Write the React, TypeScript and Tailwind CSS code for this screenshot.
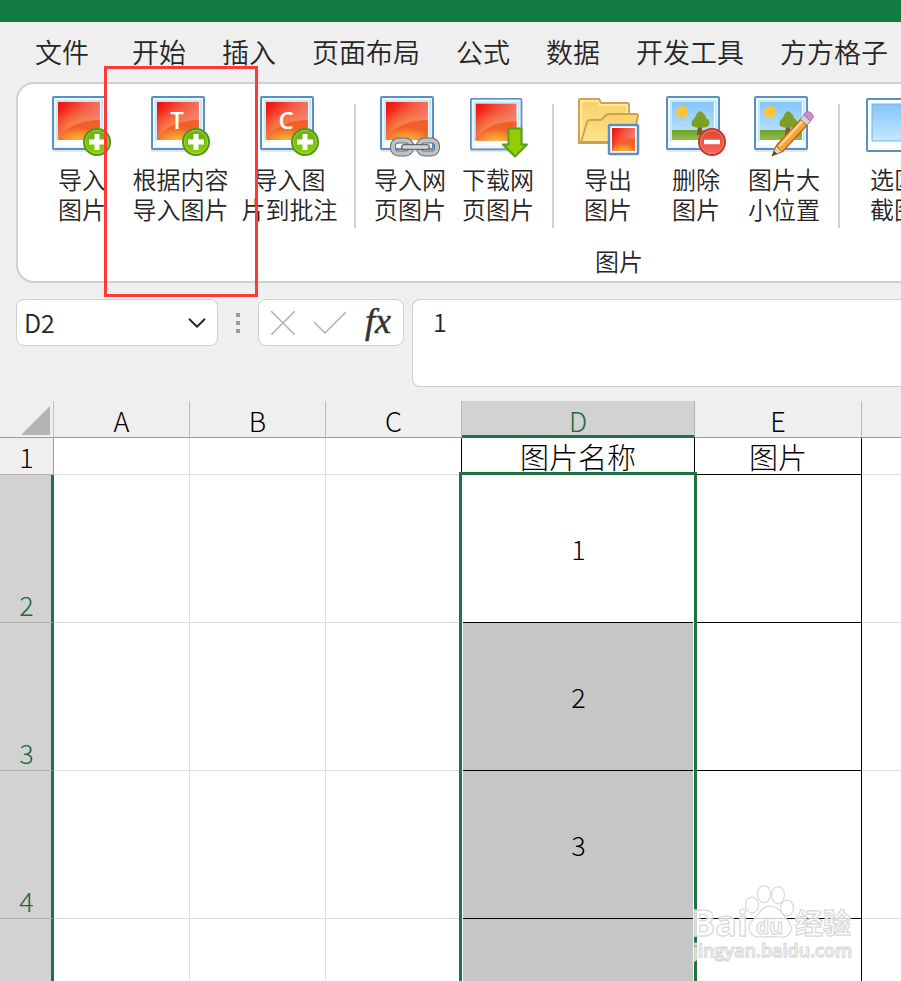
import type { ReactNode } from "react";
import { ChevronDown } from "lucide-react";

type Tool = {
  label: [string, string];
  icon: ReactNode;
  wide?: boolean;
};

const tabs = ["开始", "插入", "页面布局", "公式", "数据", "开发工具", "方方格子"];

const columns = [
  { name: "A" },
  { name: "B" },
  { name: "C" },
  { name: "D", selected: true },
  { name: "E" },
  { name: "" },
];

const rows = [
  { id: 2, value: "1", active: true },
  { id: 3, value: "2" },
  { id: 4, value: "3" },
  { id: 5, value: "" },
];

// Gradients shared by all ribbon icons
function IconDefs() {
  return (
    <svg className="absolute size-0" aria-hidden="true">
      <defs>
        <linearGradient id="red" x1="0" y1="0" x2="1" y2="0.6">
          <stop offset="0" stopColor="#f20a05" />
          <stop offset="0.5" stopColor="#f4573f" />
          <stop offset="1" stopColor="#f58a7c" />
        </linearGradient>
        <radialGradient id="glow" cx="0.5" cy="1" r="0.6">
          <stop offset="0" stopColor="#f9b838" />
          <stop offset="0.6" stopColor="#f68a2c" />
          <stop offset="1" stopColor="#f2602a" />
        </radialGradient>
        <radialGradient id="warm" cx="0.45" cy="0.95" r="0.8">
          <stop offset="0" stopColor="#f9a552" stopOpacity="0.9" />
          <stop offset="1" stopColor="#f9a552" stopOpacity="0" />
        </radialGradient>
        <linearGradient id="green" x1="0" y1="0" x2="0" y2="1">
          <stop offset="0" stopColor="#68ab18" />
          <stop offset="1" stopColor="#8fd000" />
        </linearGradient>
        <linearGradient id="sky" x1="0" y1="0" x2="0" y2="1">
          <stop offset="0" stopColor="#85c5fb" />
          <stop offset="1" stopColor="#c5e8ff" />
        </linearGradient>
        <linearGradient id="grass" x1="0" y1="0" x2="0" y2="1">
          <stop offset="0" stopColor="#6fa02c" />
          <stop offset="1" stopColor="#92bd48" />
        </linearGradient>
        <linearGradient id="folder" x1="0" y1="0" x2="0" y2="1">
          <stop offset="0" stopColor="#f8d168" />
          <stop offset="1" stopColor="#fbe591" />
        </linearGradient>
        <linearGradient id="minus" x1="0" y1="0" x2="0" y2="1">
          <stop offset="0" stopColor="#dd4433" />
          <stop offset="1" stopColor="#fb6555" />
        </linearGradient>
      </defs>
    </svg>
  );
}

function Icon({ children }: { children: ReactNode }) {
  return (
    <svg className="size-16 overflow-visible" viewBox="0 0 64 64" fill="none" aria-hidden="true">
      {children}
    </svg>
  );
}

function Frame() {
  return (
    <>
      <rect x="2" y="5" width="54" height="55" rx="2" fill="#000" opacity="0.1" />
      <rect x="3" y="5" width="52" height="52" rx="1" fill="#fff" stroke="#5b8fc2" strokeWidth="2" />
      <rect x="5" y="7" width="48" height="48" stroke="#eaf5fd" strokeWidth="2" />
      <path d="M7 49V9h45v40" stroke="#c3eafa" strokeWidth="2" />
    </>
  );
}

function RedPicture({ letter }: { letter?: string }) {
  return (
    <>
      <Frame />
      <rect x="8" y="10" width="42" height="38" fill="url(#red)" />
      <rect x="8" y="10" width="42" height="38" fill="url(#warm)" />
      <path d="M8 46C17 34 32 28 50 28v20H8z" fill="url(#glow)" />
      {letter && (
        <text x="28" y="37" textAnchor="middle" fill="#fff" fontSize="24" fontWeight="600" fontFamily="Open Sans, sans-serif">
          {letter}
        </text>
      )}
    </>
  );
}

function Landscape() {
  return (
    <>
      <Frame />
      <rect x="8" y="10" width="42" height="38" fill="url(#sky)" />
      <circle cx="18" cy="20" r="6" fill="#fcc43a" />
      <rect x="8" y="38" width="42" height="10" fill="url(#grass)" />
      <path d="M34 32h4v11h-5z" fill="#7a5a2b" />
      <path
        d="M36 19c-4 3-5 6-5 7-4 2-5 8-1 9 3 1 9 1 13 0 4-2 3-7-1-9 0-2-2-5-6-7z"
        fill="#7d9f28"
      />
    </>
  );
}

function PlusBadge() {
  return (
    <>
      <circle cx="47" cy="50" r="13" fill="url(#green)" stroke="#4f9912" strokeWidth="2" />
      <circle cx="47" cy="50" r="11.5" stroke="#a0d650" strokeWidth="1" />
      <path d="M47 42v16M39 50h16" stroke="#fff" strokeWidth="5" />
    </>
  );
}

const imagePlus = (letter?: string) => (
  <Icon>
    <RedPicture letter={letter} />
    <PlusBadge />
  </Icon>
);

const linkIcon = (
  <Icon>
    <RedPicture />
    <rect x="15" y="48.5" width="18" height="13" rx="5.5" stroke="#686b6e" strokeWidth="6" />
    <rect x="41" y="48.5" width="18" height="13" rx="5.5" stroke="#686b6e" strokeWidth="6" />
    <rect x="15" y="48.5" width="18" height="13" rx="5.5" stroke="#bfc1c3" strokeWidth="4" />
    <rect x="41" y="48.5" width="18" height="13" rx="5.5" stroke="#bfc1c3" strokeWidth="4" />
    <path d="M26 55h23" stroke="#686b6e" strokeWidth="6" strokeLinecap="round" />
    <path d="M26 55h23" stroke="#d3d5d7" strokeWidth="3.5" strokeLinecap="round" />
  </Icon>
);

const downloadIcon = (
  <Icon>
    <g transform="translate(2 2) scale(0.97)">
      <RedPicture />
    </g>
    <path
      d="M42.5 36.5h13v16H61L49 64.5 37 52.5h5.5z"
      fill="#91ce08"
      stroke="#5c9c16"
      strokeWidth="2"
      strokeLinejoin="round"
    />
  </Icon>
);

const exportIcon = (
  <Icon>
    <path d="M3 51V8q0-1 1-1h19l2 4h27q1 0 1 1v39z" fill="url(#folder)" stroke="#d3a052" strokeWidth="2" />
    <path d="M5 49V9h17l2 4h27v8" stroke="#fdeec0" strokeWidth="1.5" />
    <path
      d="M5 50l6-20q1-2 3-2h10q2 0 3-2l2-2q2-2 4-2h28q1 0 1 2l-6 26z"
      fill="url(#folder)"
      stroke="#d3a052"
      strokeWidth="2"
    />
    <rect x="33" y="33" width="29" height="29" rx="1" fill="#fff" stroke="#5b8fc2" strokeWidth="2.5" />
    <rect x="36" y="36" width="23" height="23" fill="url(#red)" />
    <path d="M36 58c4-8 12-12 23-12v13H36z" fill="url(#glow)" />
  </Icon>
);

const deleteIcon = (
  <Icon>
    <Landscape />
    <circle cx="48" cy="50" r="13" fill="url(#minus)" stroke="#c5392f" strokeWidth="2" />
    <circle cx="48" cy="50" r="11.5" stroke="#f28477" strokeWidth="1" />
    <path d="M40 50h16" stroke="#fff" strokeWidth="4.5" />
  </Icon>
);

const resizeIcon = (
  <Icon>
    <Landscape />
    <path d="M22 61l3-8 24-26 6 6-24 26z" fill="#f5a53c" stroke="#b4701b" strokeWidth="1.5" />
    <path d="M27.5 54L50.5 29" stroke="#fbd48c" strokeWidth="2.5" />
    <path d="M20 64l4-10 6 6z" fill="#ecd3a5" stroke="#8d7045" />
    <path d="M20 64l2-5 3 2.5z" fill="#454545" />
    <path d="M48 27l4-4 7 6-4 4z" fill="#d4d4d8" stroke="#8c8c92" />
    <path d="M52 22q3-4 7-1 4 3 1 6l-2 2z" fill="#ca8fcb" stroke="#aa72ad" />
  </Icon>
);

const captureIcon = (
  <Icon>
    <rect x="5" y="7" width="52" height="52" rx="1" fill="#fff" stroke="#5b8fc2" strokeWidth="2" />
    <rect x="10" y="12" width="42" height="37" fill="url(#sky)" stroke="#6fb5f0" />
  </Icon>
);

const groups: Tool[][] = [
  [
    { label: ["导入", "图片"], icon: imagePlus() },
    { label: ["根据内容", "导入图片"], icon: imagePlus("T"), wide: true },
    { label: ["导入图", "片到批注"], icon: imagePlus("C"), wide: true },
  ],
  [
    { label: ["导入网", "页图片"], icon: linkIcon },
    { label: ["下载网", "页图片"], icon: downloadIcon },
  ],
  [
    { label: ["导出", "图片"], icon: exportIcon },
    { label: ["删除", "图片"], icon: deleteIcon },
    { label: ["图片大", "小位置"], icon: resizeIcon },
  ],
  [{ label: ["选区", "截图"], icon: captureIcon }],
];

function ToolButton({ tool }: { tool: Tool }) {
  return (
    <button
      type="button"
      className={`flex shrink-0 flex-col items-center gap-2 whitespace-nowrap text-2xl leading-[30px] ${
        tool.wide ? "w-[109px]" : "w-[88px]"
      }`}
    >
      {tool.icon}
      <span>
        {tool.label[0]}
        <br />
        {tool.label[1]}
      </span>
    </button>
  );
}

function Ribbon() {
  return (
    <section className="relative pl-4">
      <div className="overflow-hidden rounded-l-[18px] border-2 border-r-0 border-[#d0d0d0] bg-white">
        <div className="flex w-[1202px] flex-col">
          <div className="flex pt-2 pl-5">
            {groups.map((group, i) => (
              <div key={i} className="flex">
                {i > 0 && <span className="mx-[10px] mt-3 h-[124px] w-0.5 bg-[#d0d0d0]" />}
                {group.map((tool) => (
                  <ToolButton key={tool.label.join("")} tool={tool} />
                ))}
              </div>
            ))}
          </div>
          <p className="pt-4 pb-1 text-center text-2xl leading-[33px]">图片</p>
        </div>
      </div>
      {/* Highlight around the "import by content" button */}
      <div className="pointer-events-none absolute -top-4 -bottom-[14px] left-[104px] w-[154px] border-3 border-[#ff3838]" />
    </section>
  );
}

function FormulaBar() {
  return (
    <div className="flex items-start pt-4 pb-[14px] pl-4">
      <div className="flex h-[47px] w-[202px] items-center rounded-lg border border-[#d0d0d0] bg-white pr-2 pl-[7px]">
        <input aria-label="名称框" defaultValue="D2" className="w-full min-w-0 text-[25px] outline-none" />
        <button type="button" aria-label="展开名称框">
          <ChevronDown className="size-6 scale-125" strokeWidth={1.5} />
        </button>
      </div>
      <div className="flex h-[47px] w-10 flex-col items-center justify-center gap-1">
        <span className="size-1 bg-[#9c9c9c]" />
        <span className="size-1 bg-[#9c9c9c]" />
        <span className="size-1 bg-[#9c9c9c]" />
      </div>
      <div className="flex h-[47px] w-[146px] items-center justify-between rounded-lg border border-[#d0d0d0] bg-white pr-3 pl-3">
        <button type="button" aria-label="取消">
          <svg className="size-6" viewBox="0 0 24 24" fill="none" stroke="#b0b0b0" strokeWidth="1.5">
            <path d="M0 0l24 24M24 0L0 24" />
          </svg>
        </button>
        <button type="button" aria-label="输入">
          <svg className="h-6 w-8" viewBox="0 0 32 24" fill="none" stroke="#b0b0b0" strokeWidth="1.5">
            <path d="M0 11l11 11L32 1" />
          </svg>
        </button>
        <button
          type="button"
          aria-label="插入函数"
          className="pb-1 font-['Liberation_Serif',serif] text-4xl leading-9 font-normal text-[#333] italic [-webkit-text-stroke:0.5px_#333]"
        >
          fx
        </button>
      </div>
      <textarea
        aria-label="编辑栏"
        defaultValue="1"
        className="ml-2 h-[88px] min-w-0 flex-1 resize-none rounded-l-lg border border-r-0 border-[#d0d0d0] bg-white px-5 py-1 text-[25px] leading-[34px] outline-none"
      />
    </div>
  );
}

function Sheet() {
  return (
    <main className="min-h-0 flex-1 overflow-hidden bg-white">
      <table className="w-full table-fixed border-separate border-spacing-0 text-[27px] leading-8 text-black">
        <colgroup>
          <col className="w-[54px]" />
          <col className="w-[136px]" />
          <col className="w-[136px]" />
          <col className="w-[136px]" />
          <col className="w-[233px]" />
          <col className="w-[167px]" />
          <col />
        </colgroup>
        <thead>
          <tr className="h-[37px] bg-[#efefef] leading-7">
            <th className="border-r border-b border-r-[#c4c4c4] border-b-[#9b9b9b] p-0">
              <svg className="mt-1 ml-5 size-[30px]" viewBox="0 0 30 30" aria-hidden="true">
                <path d="M30 0v29H1z" fill="#b4b4b4" />
              </svg>
            </th>
            {columns.map((column) => (
              <th
                key={column.name}
                scope="col"
                className={
                  column.selected
                    ? "border-r border-b-3 border-r-[#b0b0b0] border-b-[#217346] bg-[#d2d2d2] p-0 pt-1.5 font-light text-[#1e6b41]"
                    : "border-r border-b border-r-[#b8b8b8] border-b-[#9b9b9b] p-0 pt-1 font-light last:border-r-0"
                }
              >
                {column.name}
              </th>
            ))}
          </tr>
        </thead>
        <tbody>
          <tr className="h-[37px]">
            <th
              scope="row"
              className="border-r border-b border-r-[#9b9b9b] border-b-[#b0b0b0] bg-[#efefef] p-0 pt-0.5 font-light"
            >
              1
            </th>
            <td className="border-r border-b border-[#dedede]" />
            <td className="border-r border-b border-[#dedede]" />
            <td className="border-r border-b border-r-black border-b-[#dedede]" />
            <td className="border-r border-b border-black p-0 text-center text-[29px] font-light">图片名称</td>
            <td className="border-r border-b border-black p-0 text-center text-[29px] font-light">图片</td>
            <td className="border-b border-[#dedede]" />
          </tr>
          {rows.map((row) => (
            <tr key={row.id} className="h-[148px]">
              <th
                scope="row"
                className="border-r-3 border-b border-r-[#217346] border-b-[#b0b0b0] bg-[#d2d2d2] p-0 pb-px pl-0.5 align-bottom font-light text-[#1e6b41]"
              >
                {row.id}
              </th>
              <td className="border-r border-b border-[#dedede]" />
              <td className="border-r border-b border-[#dedede]" />
              <td className="border-b border-[#dedede]" />
              <td
                className={`relative border-b border-black p-0 text-center font-light ${
                  row.active ? "bg-white" : "bg-[#c6c6c6]"
                }`}
              >
                {row.value}
                {/* Selection outline lies across the cell edges */}
                <span
                  className={`absolute -right-0.5 -bottom-px -left-[3px] border-x-3 border-[#217346] shadow-[inset_1px_0_white,inset_-1px_0_white] ${
                    row.active ? "-top-[3px] border-t-3" : "top-0"
                  }`}
                />
              </td>
              <td className="border-r border-b border-black" />
              <td className="border-b border-[#dedede]" />
            </tr>
          ))}
        </tbody>
      </table>
    </main>
  );
}

function Watermark() {
  return (
    <svg
      className="pointer-events-none absolute right-[47px] bottom-4 h-[84px] w-[164px]"
      viewBox="0 0 164 84"
      fill="#fff"
      fillOpacity="0.8"
      stroke="#d9d9d9"
      strokeWidth="1.25"
      fontFamily="Open Sans, Noto Sans CJK SC, sans-serif"
    >
      <ellipse cx="62" cy="24" rx="6.5" ry="8" />
      <ellipse cx="74" cy="13" rx="6.5" ry="8.5" />
      <ellipse cx="88" cy="14" rx="6.5" ry="8.5" />
      <ellipse cx="97" cy="27" rx="6.5" ry="8" />
      <path d="M80 25c-9 0-11 9-17 14-7 6-4 17 6 17 6 0 16-1 22 0 9 1 13-8 8-15-5-5-9-16-19-16z" />
      <text x="1" y="55" fontSize="36" fontWeight="700">
        Bai
      </text>
      <text x="66" y="53" fontSize="21" fontWeight="700">
        du
      </text>
      <text x="105" y="53" fontSize="28" fontWeight="700">
        经验
      </text>
      <text x="3" y="76" fontSize="18" fontWeight="600">
        jingyan.baidu.com
      </text>
    </svg>
  );
}

export default function App() {
  return (
    <div className="relative flex h-screen flex-col overflow-hidden bg-[#efefef] font-['Noto_Sans_CJK_SC',sans-serif] font-[350] text-[#262626]">
      <IconDefs />
      <header className="h-[22px] shrink-0 bg-[#127c43]" />
      <nav className="flex h-[60px] shrink-0 items-center overflow-hidden pl-[17px] text-[27px] whitespace-nowrap">
        <button type="button" className="mr-[7px] px-[18px]">
          文件
        </button>
        {tabs.map((tab) => (
          <button key={tab} type="button" className="px-[18px]">
            {tab}
          </button>
        ))}
      </nav>
      <Ribbon />
      <FormulaBar />
      <Sheet />
      <Watermark />
    </div>
  );
}
